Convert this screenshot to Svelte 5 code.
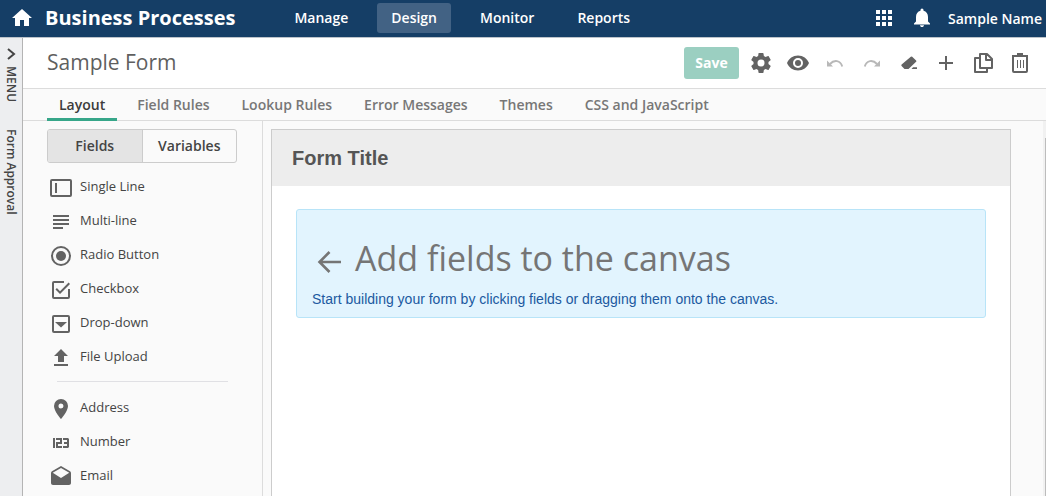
<script>
  const nav = ['Manage', 'Design', 'Monitor', 'Reports'];
  const tabs = ['Layout', 'Field Rules', 'Lookup Rules', 'Error Messages', 'Themes', 'CSS and JavaScript'];
  const basicFields = [
    { label: 'Single Line', icon: 'single' },
    { label: 'Multi-line', icon: 'multi' },
    { label: 'Radio Button', icon: 'radio' },
    { label: 'Checkbox', icon: 'checkbox' },
    { label: 'Drop-down', icon: 'dropdown' },
    { label: 'File Upload', icon: 'upload' }
  ];
  const typedFields = [
    { label: 'Address', icon: 'address' },
    { label: 'Number', icon: 'number' },
    { label: 'Email', icon: 'email' }
  ];
  const tools = ['Settings', 'Preview', 'Undo', 'Redo', 'Clear', 'Add', 'Copy', 'Delete'];

  let activeNav = $state('Design');
  let activeTab = $state('Layout');
  let panel = $state('Fields');
</script>

{#snippet fieldIcon(name)}
  <svg class="icon" viewBox="0 0 24 24" aria-hidden="true">
    {#if name === 'single'}
      <rect x="2" y="4" width="20" height="16" rx="1" fill="none" stroke="currentColor" stroke-width="2" />
      <path d="M6 7h2v10H6z" />
    {:else if name === 'multi'}
      <path d="M4 5h16v2H4zM4 9h16v2H4zM4 13h16v2H4zM4 17h10v2H4z" />
    {:else if name === 'radio'}
      <circle cx="12" cy="12" r="9" fill="none" stroke="currentColor" stroke-width="2" />
      <circle cx="12" cy="12" r="5" />
    {:else if name === 'checkbox'}
      <path d="M19 19H5V5h10V3H5a2 2 0 0 0-2 2v14a2 2 0 0 0 2 2h14a2 2 0 0 0 2-2v-8h-2zM7.910 10.080 6.500 11.500 11 16 21 6l-1.410-1.420L11 13.170z" />
    {:else if name === 'dropdown'}
      <rect x="4" y="4" width="16" height="16" rx="1" fill="none" stroke="currentColor" stroke-width="2" />
      <path d="M6 10h12L12 15.500z" />
    {:else if name === 'upload'}
      <path d="M9 16h6v-6h4l-7-7-7 7h4zM5 18h14v2H5z" />
    {:else if name === 'address'}
      <path d="M12 2a7 7 0 0 0-7 7c0 5.250 7 13 7 13s7-7.750 7-13a7 7 0 0 0-7-7zm0 9.500a2.500 2.500 0 1 1 0-5 2.500 2.500 0 0 1 0 5z" />
    {:else if name === 'number'}
      <path d="M4 7h2v10H4zM7 7h6v6H9v2h4v2H7v-6h4V9H7zM14 7h5l1 1v8l-1 1h-5v-2h4v-2h-3v-2h3V9h-4z" />
    {:else}
      <path d="M21.990 8c0-.720-.370-1.350-.940-1.700L12 1 2.950 6.300C2.380 6.650 2 7.280 2 8v10c0 1.100.900 2 2 2h16c1.100 0 2-.900 2-2zM12 13 3.740 7.840 12 3l8.260 4.840z" />
    {/if}
  </svg>
{/snippet}

{#snippet toolIcon(name)}
  <svg class="icon" viewBox="0 0 24 24" aria-hidden="true">
    {#if name === 'Settings'}
      <path d="M19.430 12.980c.040-.320.070-.640.070-.980s-.030-.660-.070-.980l2.110-1.650c.190-.150.240-.420.120-.640l-2-3.460c-.120-.220-.390-.300-.610-.220l-2.490 1c-.520-.400-1.080-.730-1.690-.980l-.380-2.650A.488.488 0 0 0 14 2h-4c-.250 0-.460.180-.490.420l-.380 2.650c-.610.250-1.170.590-1.690.980l-2.490-1c-.230-.090-.490 0-.610.220l-2 3.460c-.130.220-.070.490.120.640l2.110 1.650c-.040.320-.070.650-.070.980s.030.660.070.980l-2.110 1.650c-.190.150-.240.420-.120.640l2 3.460c.120.220.390.300.610.220l2.490-1c.520.400 1.080.730 1.690.980l.380 2.650c.030.240.240.420.490.420h4c.250 0 .460-.180.490-.420l.380-2.650c.610-.250 1.170-.590 1.690-.980l2.490 1c.230.090.490 0 .610-.220l2-3.460c.120-.220.070-.490-.120-.640zM12 15.500a3.500 3.500 0 1 1 0-7 3.500 3.500 0 0 1 0 7z" />
    {:else if name === 'Preview'}
      <path d="M12 4.500C7 4.500 2.730 7.610 1 12c1.730 4.390 6 7.500 11 7.500s9.270-3.110 11-7.500c-1.730-4.390-6-7.500-11-7.500zM12 17a5 5 0 1 1 0-10 5 5 0 0 1 0 10zm0-8a3 3 0 1 0 0 6 3 3 0 0 0 0-6z" />
    {:else if name === 'Undo'}
      <path d="M7 13C11 8.500 17.500 9 19.200 15.500" fill="none" stroke="currentColor" stroke-width="1.900" />
      <path d="M4 9.500v6h6z" />
    {:else if name === 'Redo'}
      <path d="M17 13C13 8.500 6.500 9 4.800 15.500" fill="none" stroke="currentColor" stroke-width="1.900" />
      <path d="M20 9.500v6h-6z" />
    {:else if name === 'Clear'}
      <path d="M13.800 5.800q.7-.7 1.400 0l3.900 3.600q.7.700 0 1.400L11.500 18H7.500L4.600 14.900q-.7-.7 0-1.400zM14.500 18l1.600-1.700H20V18z" />
    {:else if name === 'Add'}
      <path d="M11 5h2v6h6v2h-6v6h-2v-6H5v-2h6z" />
    {:else if name === 'Copy'}
      <path d="M9 3h7l5 5v9H9zM15 3v6h6M9 7H4v14h12v-4" fill="none" stroke="currentColor" stroke-width="2" stroke-linejoin="round" />
    {:else}
      <path d="M4 4h16v2H4zM9 2h6v2H9z" />
      <path d="M5 5v15q0 1 1 1h12q1 0 1-1V5" fill="none" stroke="currentColor" stroke-width="2" />
      <path d="M9 9h1v8H9zM12 9h1v8h-1zM15 9h1v8h-1z" />
    {/if}
  </svg>
{/snippet}

{#snippet fieldList(items)}
  <ul>
    {#each items as f}
      <li><button class="field">{@render fieldIcon(f.icon)}<span>{f.label}</span></button></li>
    {/each}
  </ul>
{/snippet}

<div class="app">
  <header>
    <a class="brand" href="#home">
      <svg class="icon" viewBox="0 0 24 24" aria-hidden="true"><path d="M10 20v-6h4v6h5v-8h3L12 3 2 12h3v8z" /></svg>
      <span>Business Processes</span>
    </a>
    <nav>
      {#each nav as item}
        <a href="#{item}" class:active={activeNav === item} onclick={() => (activeNav = item)}>{item}</a>
      {/each}
    </nav>
    <div class="account">
      <button aria-label="Apps">
        <svg class="icon" viewBox="0 0 24 24"><path d="M4 4h4v4H4zM10 4h4v4h-4zM16 4h4v4h-4zM4 10h4v4H4zM10 10h4v4h-4zM16 10h4v4h-4zM4 16h4v4H4zM10 16h4v4h-4zM16 16h4v4h-4z" /></svg>
      </button>
      <button aria-label="Notifications">
        <svg class="icon" viewBox="0 0 24 24"><path d="M12 21c1.100 0 2-.700 2-1.800h-4c0 1.100.900 1.800 2 1.800zM18 15.500V11c0-3.100-1.600-5.600-4.500-6.300V4a1.500 1.500 0 0 0-3 0v.7C7.600 5.400 6 7.900 6 11v4.500l-2 2v1h16v-1z" /></svg>
      </button>
      <a href="#account">Sample Name</a>
    </div>
  </header>

  <div class="body">
    <aside class="rail">
      <button class="menu">
        <svg viewBox="0 0 9 12" width="9" height="12" aria-hidden="true"><path d="M1 1l6 5-6 5" fill="none" stroke="currentColor" stroke-width="2" /></svg>
        <span>MENU</span>
      </button>
      <span>Form Approval</span>
    </aside>

    <main>
      <div class="titlebar">
        <h1>Sample Form</h1>
        <div class="tools">
          <button class="save" disabled>Save</button>
          {#each tools as t}
            <button class="tool" aria-label={t} disabled={t === 'Undo' || t === 'Redo'}>{@render toolIcon(t)}</button>
          {/each}
        </div>
      </div>

      <div class="tabs" role="tablist">
        {#each tabs as t}
          <button role="tab" aria-selected={activeTab === t} class:active={activeTab === t} onclick={() => (activeTab = t)}>{t}</button>
        {/each}
      </div>

      <div class="workspace">
        <section class="palette">
          <div class="switch">
            {#each ['Fields', 'Variables'] as p}
              <button class:active={panel === p} aria-pressed={panel === p} onclick={() => (panel = p)}>{p}</button>
            {/each}
          </div>
          {@render fieldList(basicFields)}
          <hr />
          {@render fieldList(typedFields)}
        </section>

        <section class="stage">
          <div class="form">
            <h2>Form Title</h2>
            <div class="drop">
              <h3>
                <svg viewBox="0 0 24 24" width="24" height="24" aria-hidden="true"><path d="M24 12H3M12.500 2 2.500 12l10 10" fill="none" stroke="currentColor" stroke-width="2.600" /></svg>
                <span>Add fields to the canvas</span>
              </h3>
              <p>Start building your form by clicking fields or dragging them onto the canvas.</p>
            </div>
          </div>
        </section>
        <div class="scroll"><div class="thumb"></div></div>
      </div>
    </main>
  </div>
</div>

<style>
  :global(body) { margin: 0; }
  .app {
    display: flex;
    flex-direction: column;
    height: 100vh;
    overflow: hidden;
    font-family: "Open Sans", "Noto Sans", sans-serif;
    font-size: 14px;
    color: #444;
    background: #fafafa;
  }
  .app :global(*) { box-sizing: border-box; }
  button {
    font: inherit;
    color: inherit;
    background: none;
    border: 0;
    padding: 0;
    cursor: pointer;
  }
  a { color: inherit; text-decoration: none; }
  h1, h2, h3, p, ul { margin: 0; padding: 0; }
  .icon { display: block; width: 24px; height: 24px; fill: currentColor; flex: none; }

  header {
    display: flex;
    align-items: center;
    flex: none;
    height: 38px;
    padding: 0 4px 1px 10px;
    background: #153e66;
    border-bottom: 1px solid #bcc3ca;
    color: #fff;
    font-weight: 600;
  }
  .brand { display: flex; align-items: center; gap: 11px; font-size: 20px; line-height: 26px; font-weight: 700; white-space: nowrap; }
  nav { display: flex; gap: 15px; margin-left: 45px; }
  nav a { padding: 0 14px; line-height: 30px; border-radius: 3px; }
  nav a.active { background: #426284; }
  .account { display: flex; align-items: center; margin-left: auto; gap: 14px; white-space: nowrap; }

  .body { display: flex; flex: 1; min-height: 0; }
  .rail {
    display: flex;
    flex-direction: column;
    align-items: center;
    flex: none;
    gap: 27px;
    width: 23px;
    padding-top: 10px;
    background: #edeef0;
    border-right: 1px solid #b4b4b4;
    font-size: 12px;
    font-weight: 600;
    line-height: 22px;
  }
  .rail span { writing-mode: vertical-rl; }
  .menu { display: flex; flex-direction: column; align-items: center; gap: 6px; line-height: 22px; }
  main { display: flex; flex-direction: column; flex: 1; min-width: 0; }

  .titlebar {
    display: flex;
    align-items: center;
    justify-content: space-between;
    flex: none;
    height: 51px;
    padding: 0 14px 0 24px;
    background: #fff;
    border-bottom: 1px solid #dcdcdc;
  }
  h1 { padding-bottom: 2px; font-size: 21px; font-weight: 400; color: #5f5f5f; }
  .tools { display: flex; align-items: center; gap: 13px; color: #636363; }
  .save {
    width: 55px;
    height: 32px;
    margin-right: -3px;
    padding-bottom: 2px;
    border-radius: 3px;
    background: #9bcfc1;
    color: #fff;
    font-weight: 700;
  }
  .tool:disabled { color: #b8b8b8; }

  .tabs {
    display: flex;
    flex: none;
    gap: 8px;
    height: 32px;
    padding-left: 24px;
    border-bottom: 1px solid #dcdcdc;
  }
  .tabs button { height: 32px; padding: 2px 12px 0; border-bottom: 3px solid transparent; font-weight: 600; color: #777; white-space: nowrap; }
  .tabs button.active { color: #3c3c3c; border-bottom-color: #36a689; }

  .workspace { display: flex; flex: 1; min-height: 0; }
  .palette { flex: none; width: 240px; padding: 8px 25px 0 24px; border-right: 1px solid #dcdcdc; }
  .switch { display: flex; height: 34px; margin-bottom: 7px; border: 1px solid #ccc; border-radius: 3px; overflow: hidden; font-weight: 600; }
  .switch button { flex: 1; padding-bottom: 2px; }
  .switch button.active { background: #e4e4e4; border-right: 1px solid #ccc; }
  ul { list-style: none; }
  .field { display: flex; gap: 7px; width: 100%; height: 34px; padding: 6px 2px 0; text-align: left; font-size: 13px; line-height: 20px; }
  .field .icon { color: #636363; }
  hr { margin: 7px 9px 9px 10px; border: 0; border-top: 1px solid #e0e0e4; }

  .stage { flex: 1; display: flex; min-width: 0; padding: 8px 32px 0 8px; }
  .form { flex: 1; background: #fff; border: 1px solid #ccc; border-bottom: 0; font-family: "Liberation Sans", Arial, sans-serif; }
  h2 { padding: 0 20px; line-height: 56px; background: #ededed; font-size: 20px; color: #555; }
  .drop { margin: 23px 24px; padding: 23px 15px 8px; border: 1px solid #b8e4f8; border-radius: 3px; background: #e2f4fe; }
  h3 { display: flex; align-items: center; gap: 14px; padding-left: 5px; font: 400 34px/50px "Open Sans", sans-serif; color: #757575; }
  h3 svg { margin-top: 8px; }
  .drop p { padding-top: 6px; font-size: 14px; line-height: 20px; color: #2059a0; }
  .scroll { flex: none; width: 3px; padding: 17px 0 0 2px; background: #f1f1f1; }
  .thumb { height: 100%; background: #bcbcbc; }
</style>
